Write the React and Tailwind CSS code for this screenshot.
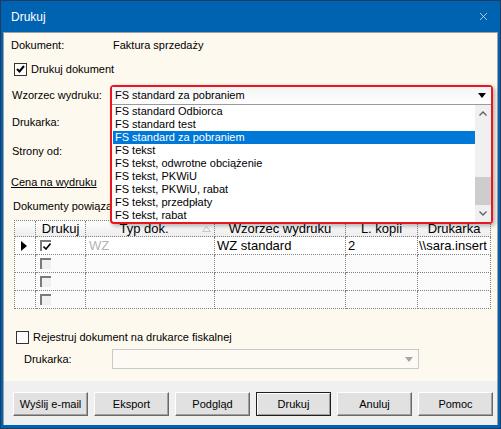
import { X } from "lucide-react";

const templates = [
  "FS standard Odbiorca",
  "FS standard test",
  "FS standard za pobraniem",
  "FS tekst",
  "FS tekst, odwrotne obciążenie",
  "FS tekst, PKWiU",
  "FS tekst, PKWiU, rabat",
  "FS tekst, przedpłaty",
  "FS tekst, rabat",
];

const rows = [
  { active: true, checked: true, type: "WZ", template: "WZ standard", copies: "2", printer: "\\\\sara.insert" },
  { active: false },
  { active: false },
  { active: false },
];

// small triangle used by the combos
const Arrow = ({ color = "#000" }) => (
  <svg width="8" height="5" viewBox="0 0 8 5">
    <path d="M0 0 L8 0 L4 5 Z" fill={color} />
  </svg>
);

const Checkbox = ({ checked }) => (
  <span className="w-[13px] h-[13px] border border-[#333] bg-[#fdfdfd] flex items-center justify-center shrink-0">
    {checked && (
      <svg width="9" height="8" viewBox="0 0 9 8">
        <path d="M1 4 L3.5 6.5 L8 1" stroke="#000" strokeWidth="2" fill="none" />
      </svg>
    )}
  </span>
);

const WinButton = ({ label, isDefault }) => (
  <button
    className={`w-[75px] h-[24px] bg-[#e1e1e1] text-[11px] text-black flex items-center justify-center ${
      isDefault
        ? "border border-[#1f1f1f] shadow-[inset_1px_1px_0_#fff,inset_-1px_-1px_0_#a0a0a0]"
        : "border border-t-white border-l-white border-b-[#696969] border-r-[#696969] shadow-[inset_-1px_-1px_0_#a0a0a0]"
    }`}
  >
    {label}
  </button>
);

const cell = "border-r border-b border-dotted border-[#808080]";

export default function App() {
  return (
    <div className="w-[501px] h-[429px] bg-[#0063b1] border border-[#1b3c63] flex flex-col font-['Liberation_Sans',sans-serif] text-[11px] text-black">
      {/* Title bar */}
      <div className="h-[31px] flex items-center justify-between pl-[10px] pr-[10px] text-white">
        <span className="text-[12px]">Drukuj</span>
        <X size={13} strokeWidth={1.2} className="text-white" />
      </div>

      <div className="flex-1 flex flex-col px-[2px] pb-[3px]">
        {/* Form area */}
        <div className="relative flex-1 bg-[#fef9ee] border-t border-l border-r border-[#a0a0a0] pl-[7px] flex flex-col">
          <div className="mt-[5px] h-[14px] flex items-center">
            <span className="w-[102px]">Dokument:</span>
            <span>Faktura sprzedaży</span>
          </div>
          <div className="mt-[10px] h-[14px] flex items-center pl-[3px]">
            <Checkbox checked />
            <span className="ml-[4px]">Drukuj dokument</span>
          </div>
          <div className="mt-[10px] h-[19px] flex items-center pl-[1px]">Wzorzec wydruku:</div>
          <div className="mt-[7px] h-[20px] flex items-center pl-[1px]">Drukarka:</div>
          <div className="mt-[9px] h-[20px] flex items-center pl-[1px]">Strony od:</div>
          <div className="mt-[14px] h-[14px] flex items-center">
            <span className="underline">Cena na wydruku</span>
          </div>
          <div className="mt-[10px] h-[14px] flex items-center pl-[2px]">Dokumenty powiązane</div>

          {/* Related documents grid */}
          <div className="mt-[7px] ml-[3px] w-[477px] border-t border-l border-dotted border-[#808080] text-[13px]">
            <div className="grid grid-cols-[21px_50px_129px_131px_72px_73px] h-[16px] bg-gradient-to-b from-white to-[#ececec] leading-[15px]">
              <div className={cell}></div>
              <div className={`${cell} text-center`}>Drukuj</div>
              <div className={`${cell} flex items-center justify-center relative`}>
                <span className="-ml-[12px]">Typ dok.</span>
                <svg width="9" height="6" viewBox="0 0 9 6" className="absolute right-[3px] top-[5px]">
                  <path d="M0.5 5.5 L4.5 0.5 L8.5 5.5 Z" fill="none" stroke="#c8c8c8" />
                </svg>
              </div>
              <div className={`${cell} text-center`}>Wzorzec wydruku</div>
              <div className={`${cell} text-center`}>L. kopii</div>
              <div className={`${cell} text-center`}>Drukarka</div>
            </div>
            {rows.map((r, i) => (
              <div
                key={i}
                className={`grid grid-cols-[21px_50px_129px_131px_72px_73px] h-[18px] leading-[17px] ${
                  r.active ? "bg-white" : "bg-[#fbfbfb]"
                }`}
              >
                <div className={`${cell} flex items-center pl-[6px]`}>
                  {r.active && (
                    <svg width="6" height="10" viewBox="0 0 6 10">
                      <path d="M0 0 L6 5 L0 10 Z" fill="#000" />
                    </svg>
                  )}
                </div>
                <div className={`${cell} flex items-center pl-[4px]`}>
                  <span
                    className={`w-[11px] h-[11px] border-t-2 border-l-2 border-[#7a7a7a] flex items-center justify-center ${
                      r.active ? "bg-white" : "bg-[#f0f0f0]"
                    }`}
                  >
                    {r.checked && (
                      <svg width="8" height="7" viewBox="0 0 8 7">
                        <path d="M0.5 3.5 L3 6 L7.5 0.5" stroke="#000" strokeWidth="1.6" fill="none" />
                      </svg>
                    )}
                  </span>
                </div>
                <div className={`${cell} pl-[3px] text-[#b4b4b4]`}>{r.type}</div>
                <div className={`${cell} pl-[2px]`}>{r.template}</div>
                <div className={`${cell} pl-[2px]`}>{r.copies}</div>
                <div className={`${cell} pl-[1px] overflow-hidden whitespace-nowrap`}>{r.printer}</div>
              </div>
            ))}
          </div>

          <div className="mt-[21px] h-[14px] flex items-center pl-[5px]">
            <Checkbox />
            <span className="ml-[4px]">Rejestruj dokument na drukarce fiskalnej</span>
          </div>
          <div className="mt-[5px] h-[20px] flex items-center pl-[13px]">
            <span className="w-[88px]">Drukarka:</span>
            <div className="w-[307px] h-[20px] border border-[#c9c9c9] bg-[#fdfaf4] flex items-center justify-end pr-[5px]">
              <Arrow color="#a6a6a6" />
            </div>
          </div>

          {/* Open template dropdown */}
          <div className="absolute left-[106px] top-[52px] w-[383px] border-2 border-[#e8171f] rounded-[4px] bg-white shadow-[2px_2px_4px_rgba(0,0,0,0.3)] flex flex-col">
            <div className="h-[17px] flex items-center justify-between pl-[3px] pr-[5px] bg-gradient-to-b from-[#f4f4f4] to-white">
              <span>FS standard za pobraniem</span>
              <Arrow />
            </div>
            <div className="h-[1px] bg-[#9a9a9a]"></div>
            <div className="flex h-[117px]">
              <div className="flex-1 flex flex-col pl-[1px]">
                {templates.map((t, i) => (
                  <div
                    key={t}
                    className={`h-[13px] leading-[13px] pl-[2px] whitespace-nowrap ${
                      i === 2 ? "bg-[#0078d7] text-white" : ""
                    }`}
                  >
                    {t}
                  </div>
                ))}
              </div>
              <div className="w-[16px] bg-[#f0f0f0] flex flex-col items-center">
                <div className="h-[17px] flex items-center justify-center">
                  <svg width="8" height="5" viewBox="0 0 8 5">
                    <path d="M0.5 4.5 L4 1 L7.5 4.5" stroke="#606060" strokeWidth="1.3" fill="none" />
                  </svg>
                </div>
                <div className="mt-[55px] w-[16px] h-[28px] bg-[#cdcdcd]"></div>
                <div className="flex-1"></div>
                <div className="h-[17px] flex items-center justify-center">
                  <svg width="8" height="5" viewBox="0 0 8 5">
                    <path d="M0.5 0.5 L4 4 L7.5 0.5" stroke="#606060" strokeWidth="1.3" fill="none" />
                  </svg>
                </div>
              </div>
            </div>
          </div>
        </div>

        {/* Button bar */}
        <div className="h-[44px] bg-[#f0f0f0] border-l border-r border-[#a0a0a0] pt-[11px] pl-[9px] flex gap-[6px]">
          <WinButton label="Wyślij e-mail" />
          <WinButton label="Eksport" />
          <WinButton label="Podgląd" />
          <WinButton label="Drukuj" isDefault />
          <WinButton label="Anuluj" />
          <WinButton label="Pomoc" />
        </div>
      </div>
    </div>
  );
}
